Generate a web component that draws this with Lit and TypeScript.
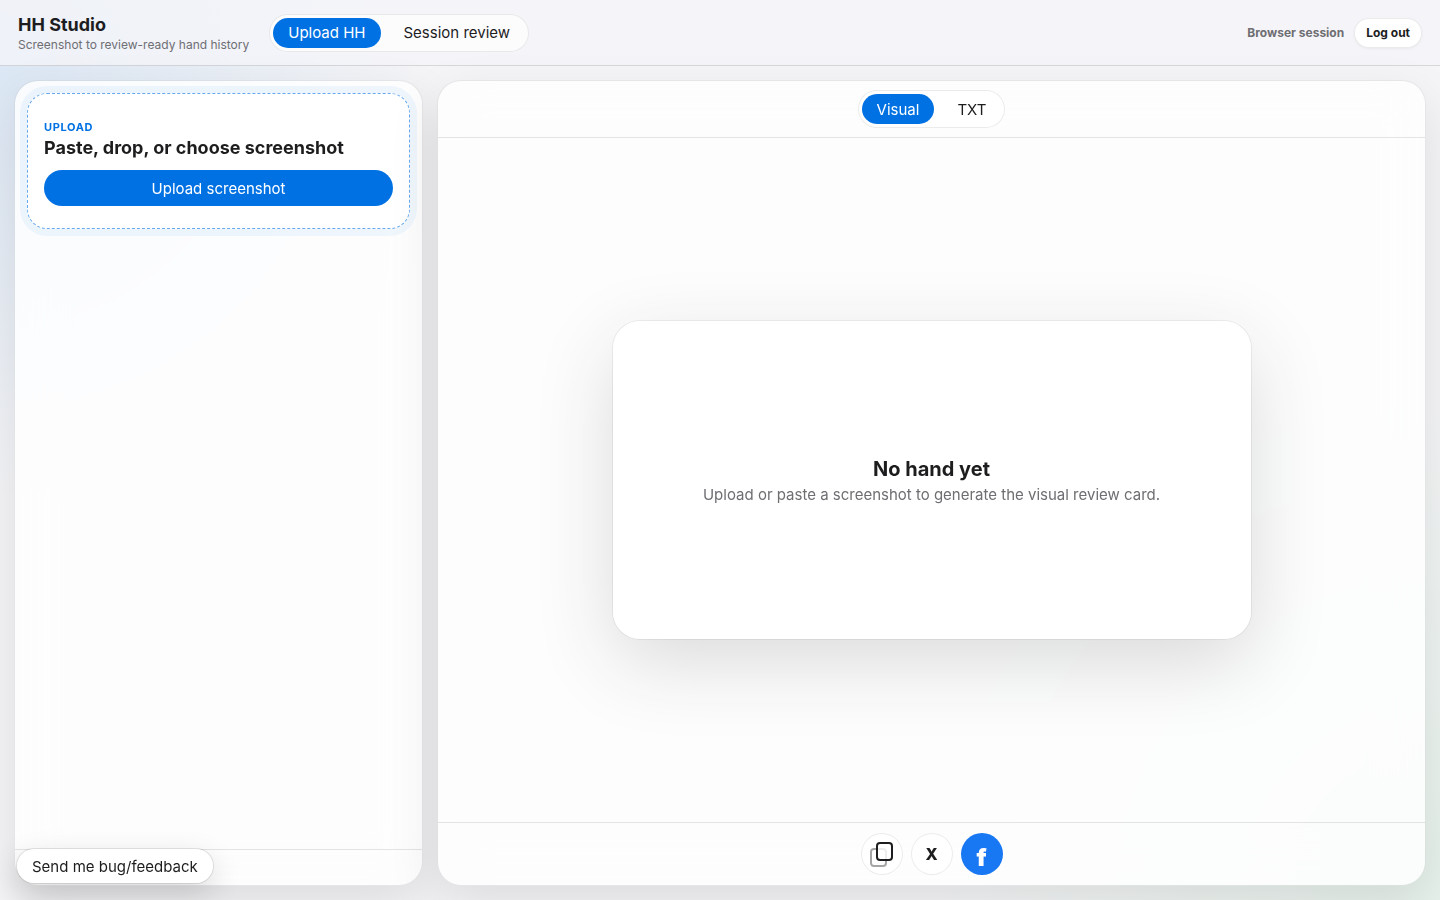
import { LitElement, html, css } from "lit";
import { customElement, state } from "lit/decorators.js";

@customElement("app-root")
export class AppRoot extends LitElement {
  @state() private page = "upload";
  @state() private view = "visual";

  static styles = css`
    :host {
      --blue: #0071e3;
      --ink: #1d1d1f;
      --muted: #6e6e73;
      --line: rgba(0, 0, 0, 0.1);
      display: flex;
      flex-direction: column;
      height: 100vh;
      overflow: hidden;
      color: var(--ink);
      font-family: Inter, "Liberation Sans", sans-serif;
      font-size: 15px;
      background:
        radial-gradient(circle at 0% 8%, rgba(0, 113, 227, 0.1), transparent 26%),
        radial-gradient(circle at 100% 100%, rgba(52, 199, 89, 0.08), transparent 30%),
        #f5f5f7;
    }
    * { box-sizing: border-box; }
    h1, h2, p { margin: 0; }
    button {
      font: inherit;
      color: inherit;
      border: 0;
      padding: 0;
      background: transparent;
      cursor: pointer;
    }
    .header {
      display: flex;
      align-items: center;
      gap: 20px;
      height: 66px;
      padding: 0 18px;
      flex: none;
      border-bottom: 1px solid rgba(0, 0, 0, 0.12);
      background: rgba(245, 245, 250, 0.72);
    }
    .brand { padding-top: 2px; }
    .brand h1 { font-size: 18px; line-height: 22px; font-weight: 700; }
    .brand p { font-size: 12px; line-height: 18px; color: var(--muted); }
    .tabs {
      display: flex;
      gap: 8px;
      padding: 3px;
      border: 1px solid rgba(0, 0, 0, 0.08);
      border-radius: 999px;
      background: rgba(255, 255, 255, 0.7);
    }
    .tab {
      height: 30px;
      padding: 0 15px;
      border-radius: 999px;
      white-space: nowrap;
    }
    .tab.active { background: var(--blue); color: #fff; }
    .account {
      display: flex;
      align-items: center;
      gap: 10px;
      margin-left: auto;
      font-size: 12px;
      font-weight: 700;
      color: var(--muted);
    }
    .logout {
      height: 30px;
      padding: 0 11px;
      border: 1px solid rgba(0, 0, 0, 0.08);
      border-radius: 999px;
      background: #fff;
      color: var(--ink);
      box-shadow: 0 1px 3px rgba(0, 0, 0, 0.05);
    }
    .main {
      display: grid;
      grid-template-columns: minmax(320px, 409px) minmax(0, 1fr);
      gap: 14px;
      padding: 14px;
      flex: 1;
      min-height: 0;
    }
    .panel {
      display: flex;
      flex-direction: column;
      min-width: 0;
      border: 1px solid rgba(0, 0, 0, 0.06);
      border-radius: 24px;
      background: rgba(255, 255, 255, 0.82);
      background-clip: padding-box;
      backdrop-filter: blur(24px);
      box-shadow: 0 18px 50px rgba(0, 0, 0, 0.1);
      overflow: hidden;
    }
    .drop {
      display: flex;
      flex-direction: column;
      justify-content: center;
      height: 136px;
      margin: 12px 12px 0;
      padding: 4px 16px 0;
      border: 1px dashed rgba(0, 113, 227, 0.6);
      border-radius: 20px;
      background: rgba(255, 255, 255, 0.9);
      box-shadow: 0 0 0 7px rgba(0, 113, 227, 0.06);
    }
    .eyebrow {
      font-size: 11px;
      line-height: 14px;
      font-weight: 700;
      letter-spacing: 0.06em;
      color: var(--blue);
    }
    .drop h2 { font-size: 18px; line-height: 28px; font-weight: 700; }
    .primary {
      height: 36px;
      margin-top: 8px;
      border-radius: 999px;
      background: var(--blue);
      color: #fff;
    }
    .side-foot {
      height: 36px;
      margin-top: auto;
      border-top: 1px solid var(--line);
    }
    .toolbar {
      display: flex;
      justify-content: center;
      align-items: center;
      height: 57px;
      border-bottom: 1px solid var(--line);
    }
    .stage {
      display: grid;
      place-items: center;
      flex: 1;
      padding: 24px;
    }
    .empty {
      display: flex;
      flex-direction: column;
      align-items: center;
      justify-content: center;
      width: 100%;
      max-width: 640px;
      min-height: 320px;
      padding: 26px 24px 24px;
      border: 1px solid rgba(0, 0, 0, 0.06);
      border-radius: 28px;
      background: #fff;
      background-clip: padding-box;
      box-shadow: 0 24px 80px rgba(0, 0, 0, 0.14);
      text-align: center;
    }
    .empty h2 { font-size: 20px; line-height: 28px; font-weight: 700; }
    .empty p { line-height: 24px; color: var(--muted); }
    .share {
      display: flex;
      justify-content: center;
      align-items: center;
      gap: 8px;
      height: 63px;
      border-top: 1px solid var(--line);
    }
    .round {
      display: grid;
      place-items: center;
      width: 42px;
      height: 42px;
      border: 1px solid rgba(0, 0, 0, 0.08);
      border-radius: 50%;
      background: #fff;
    }
    .round svg { display: block; }
    .x { font-size: 16px; font-weight: 800; }
    .fb {
      border: 0;
      background: #1877f2;
      color: #fff;
      font-size: 24px;
      line-height: 24px;
      font-weight: 900;
      padding-top: 8px;
    }
    .feedback {
      position: fixed;
      left: 16px;
      bottom: 16px;
      height: 36px;
      padding: 0 15px;
      border: 1px solid rgba(0, 0, 0, 0.1);
      border-radius: 999px;
      background: #fff;
      background-clip: padding-box;
      box-shadow: 0 10px 30px rgba(0, 0, 0, 0.14);
    }
  `;

  private tab(label: string, active: boolean, pick: () => void) {
    return html`<button class="tab ${active ? "active" : ""}" aria-pressed=${active} @click=${pick}>${label}</button>`;
  }

  render() {
    return html`
      <header class="header">
        <div class="brand">
          <h1>HH Studio</h1>
          <p>Screenshot to review-ready hand history</p>
        </div>
        <nav class="tabs">
          ${this.tab("Upload HH", this.page === "upload", () => (this.page = "upload"))}
          ${this.tab("Session review", this.page === "review", () => (this.page = "review"))}
        </nav>
        <div class="account">
          <span>Browser session</span>
          <button class="logout">Log out</button>
        </div>
      </header>
      <main class="main">
        <section class="panel">
          <div class="drop">
            <p class="eyebrow">UPLOAD</p>
            <h2>Paste, drop, or choose screenshot</h2>
            <button class="primary">Upload screenshot</button>
          </div>
          <div class="side-foot"></div>
        </section>
        <section class="panel">
          <div class="toolbar">
            <div class="tabs">
              ${this.tab("Visual", this.view === "visual", () => (this.view = "visual"))}
              ${this.tab("TXT", this.view === "txt", () => (this.view = "txt"))}
            </div>
          </div>
          <div class="stage">
            <div class="empty">
              <h2>No hand yet</h2>
              <p>Upload or paste a screenshot to generate the visual review card.</p>
            </div>
          </div>
          <div class="share">
            <button class="round" aria-label="Copy">
              <svg width="40" height="40" viewBox="0 0 40 40" fill="none" stroke="#1d1d1f" stroke-width="2">
                <rect x="9" y="15" width="15" height="17" rx="3" opacity="0.4" />
                <rect x="15" y="9" width="15" height="17" rx="3" fill="#fff" fill-opacity="0.8" />
              </svg>
            </button>
            <button class="round x" aria-label="Share on X">X</button>
            <button class="round fb" aria-label="Share on Facebook">f</button>
          </div>
        </section>
      </main>
      <button class="feedback">Send me bug/feedback</button>
    `;
  }
}
